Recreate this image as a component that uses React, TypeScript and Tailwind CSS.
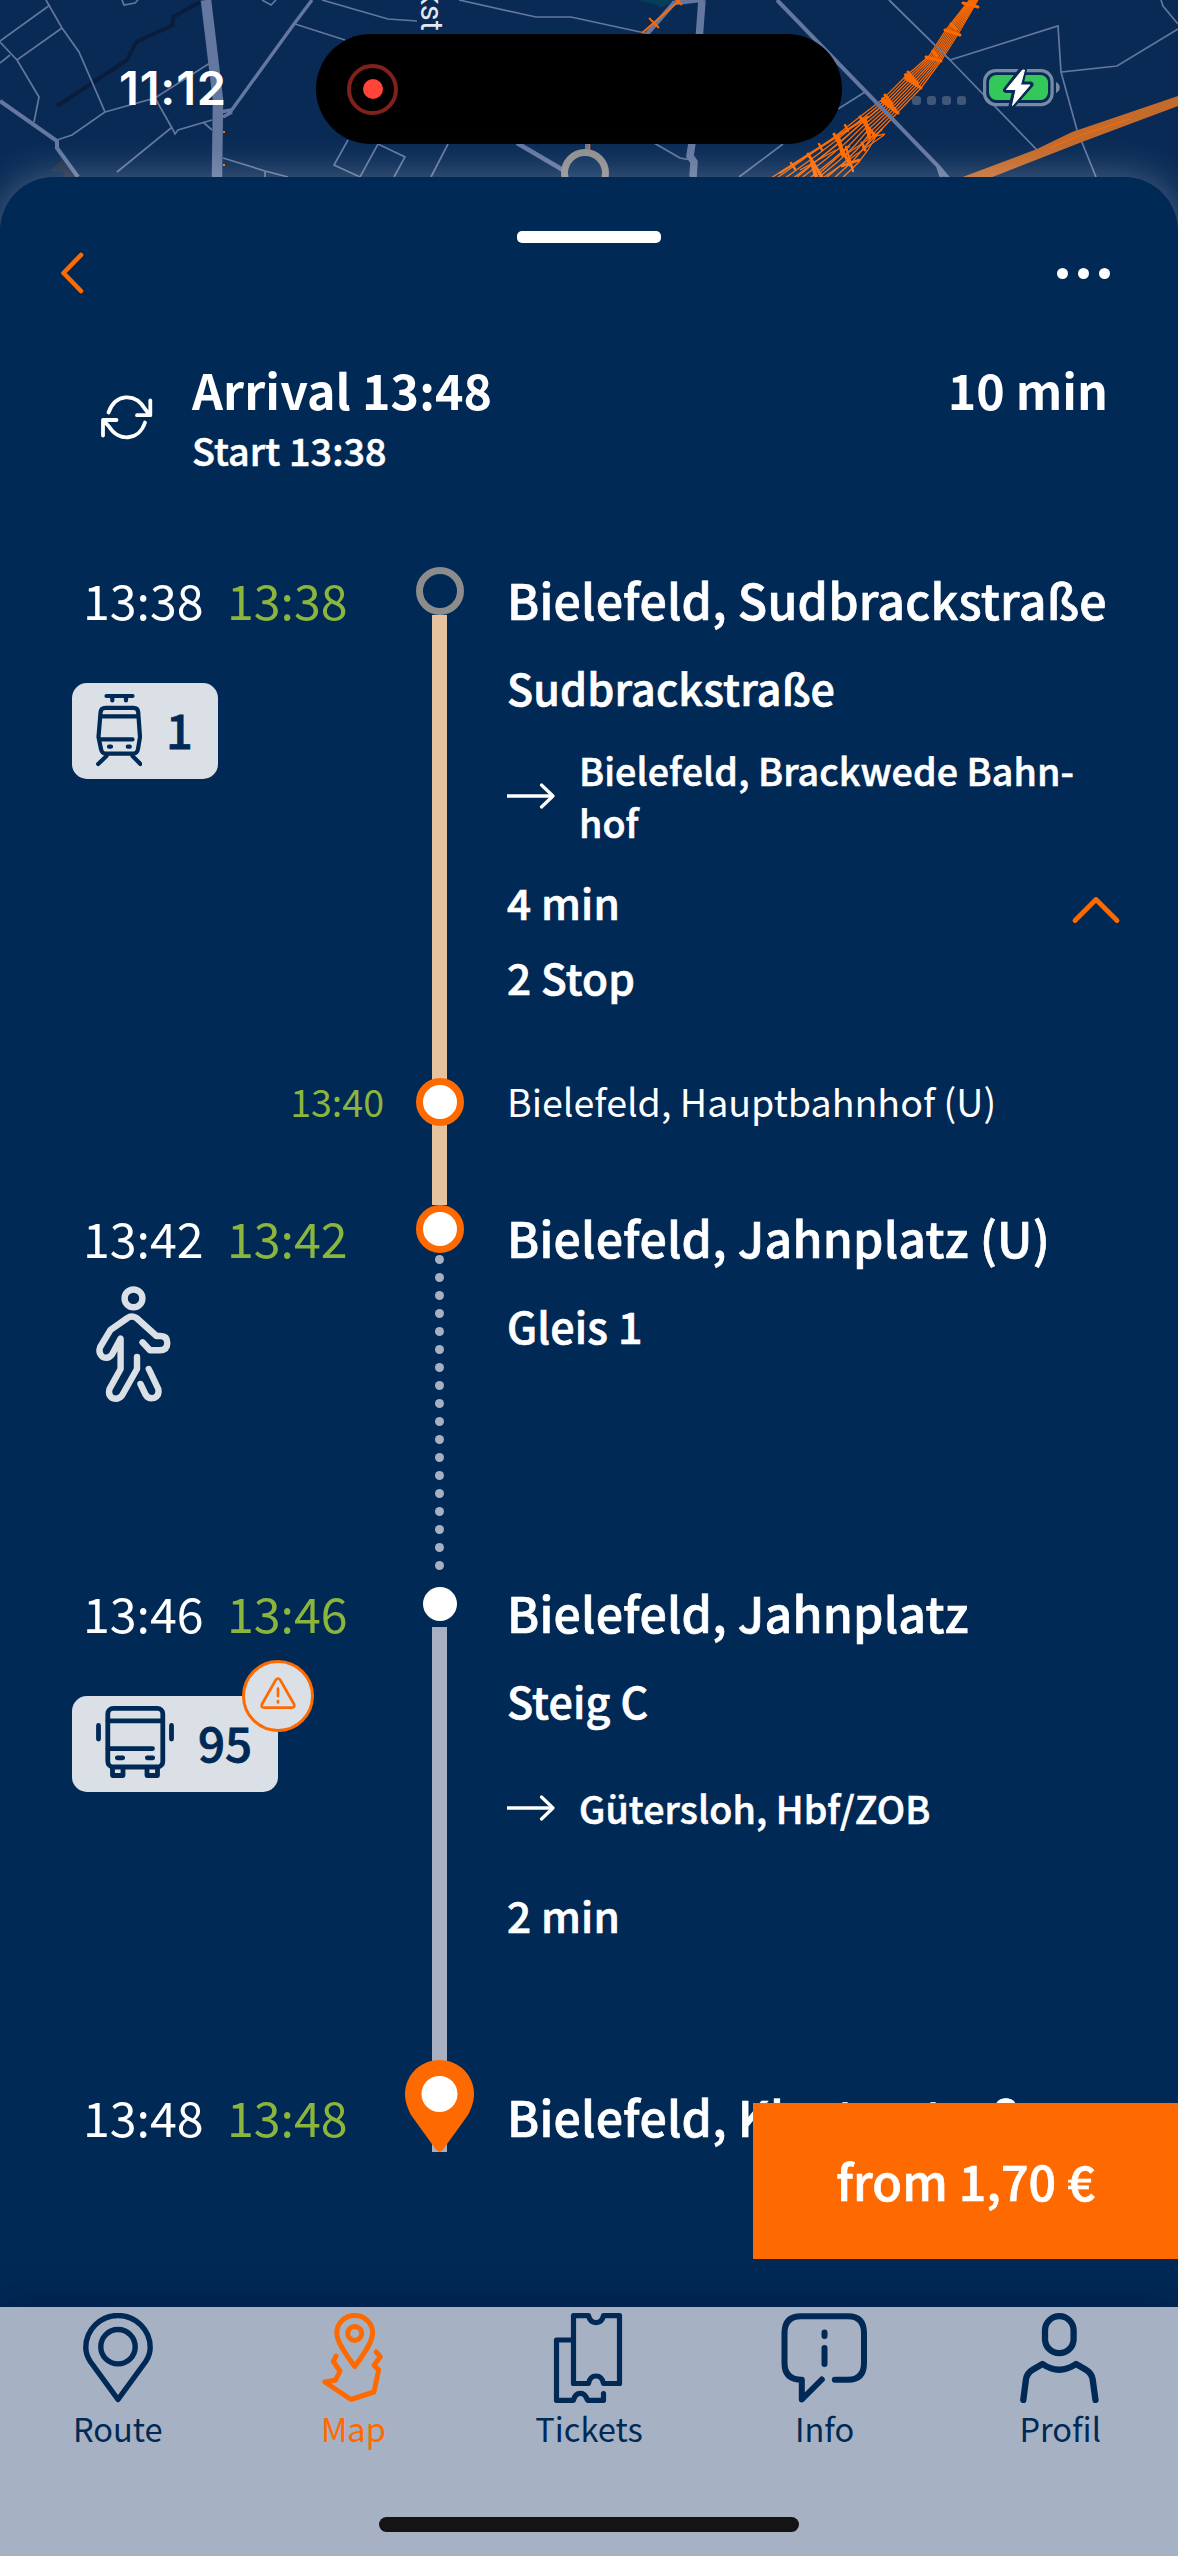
import React from "react";

const ORANGE = "#ff6a00";
const NAVY = "#002955";

/* ---------- Map behind the sheet ---------- */

const railLeft: [number, number][] = [
  [971, -2], [946, 30], [929, 56], [905, 77], [883, 99], [857, 119], [833, 138], [808, 156], [774, 180],
];
const railRight: [number, number][] = [
  [979, -2], [958, 34], [941, 61], [921, 88], [898, 112], [878, 133], [868, 150], [858, 163], [838, 182],
];
const strandCount = 9;

function strand(i: number) {
  const t = i / (strandCount - 1);
  return railLeft
    .map(([x, y], k) => {
      const [rx, ry] = railRight[k];
      return `${(x + (rx - x) * t).toFixed(1)},${(y + (ry - y) * t).toFixed(1)}`;
    })
    .join(" ");
}

function MapBackdrop() {
  return (
    <svg className="absolute inset-0" width="1178" height="260" viewBox="0 0 1178 260" fill="none">
      <rect width="1178" height="260" fill="#082a55" />
      <path d="M638 0 L664 7 L674 0Z" fill="#063d58" />
      <path d="M50 171 L62 159 L76 177 H64 L63 172Z" fill="#1c2f4a" />
      <path d="M200 2 L173 17 V25 L136 42 L127 60 L57 106" stroke="#0a1d3d" strokeWidth="4" />
      <g stroke="#63779f" strokeWidth="1.7">
        <path d="M46 0 L62 28 L79 52 L105 112 L72 135 L57 140" />
        <path d="M50 5 L0 41 M62 28 L17 60 L0 42 M10 55 L0 63 M17 60 L39 97 L34 122" />
        <path d="M122 0 L124 5 L135 3 L138 0 M262 0 L271 5 L276 0" />
        <path d="M105 112 L155 98 L210 63 M155 98 L172 128 L175 134 L178 130 L212 120 M171 128 L117 172 M203 122 L212 130" />
        <path d="M223 158 L265 171 L288 177 M265 171 V177" />
        <path d="M322 0 L388 19 L417 21 M295 24 L345 40 M459 0 L536 17 H571 L645 33" />
        <path d="M348 140 L334 165 L360 177 L378 144 L405 157 L394 177 M448 144 L431 177" />
        <path d="M654 143 L680 158 L691 160 M783 144 L739 177 M838 109 L865 92" />
        <path d="M889 0 L950 60 L1037 150 M950 60 L1058 26 L1061 72 L1117 66 L1178 29 M1061 72 L1077 130 L1096 177 M1161 0 L1163 6 L1178 24" />
      </g>
      <path d="M0 101 L57 141 V148 L78 177" stroke="#63779f" strokeWidth="4" />
      <path d="M312 0 L294 24 L231 111 M220 112 L231 110 M223 117 L232 112" stroke="#63779f" strokeWidth="3.4" />
      <path d="M206 0 L218 100 L217 177" stroke="#63779f" strokeWidth="10.5" />
      <path d="M702 0 L699 40 M692 143 L690 156 L694 162 L693 177" stroke="#63779f" strokeWidth="7.5" />
      <path d="M517 143 L563 170" stroke="#63779f" strokeWidth="4.5" />
      <path d="M700 0 L674 3 L646 35" stroke="#63779f" strokeWidth="4.5" />
      <path d="M680 0 L642 33 M649 18 L659 28 M675 -1 L682 5" stroke={ORANGE} strokeWidth="1.8" />
      <path d="M587 144 V150" stroke="#63779f" strokeWidth="4" />
      <path d="M589.5 144 V150" stroke={ORANGE} strokeWidth="1.5" />
      <path d="M223 131 h2 v2 h-2z M223 164 h2 v2 h-2z" fill={ORANGE} />
      <circle cx="585" cy="173" r="20.5" fill="#0c325f" stroke="#8f8f8f" strokeWidth="7" />
      <path d="M960 178 L1037 149 L1072 132 L1178 96 V106 L1082 142 L990 178Z" fill="#c46a2b" />
      <path d="M1050 148 L1081 135 L1130 119" stroke={ORANGE} strokeWidth="1" />
      <g stroke={ORANGE} strokeWidth="1.3">
        {Array.from({ length: strandCount }, (_, i) => (
          <polyline key={i} points={strand(i)} />
        ))}
        <path d="M862 150 L883 128 M866 138 L885 134 M845 155 L882 130 M760 185 L868 116" />
        <path d="M796 178 L842 140 L884 104 M812 180 L850 146 M820 180 L884 135 M800 170 L836 150" />
      </g>
      <g stroke={ORANGE} strokeWidth="3" strokeLinecap="round">
        <path d="M963 3 L978 7 M945 30 L960 35 M926 57 L941 61 M905 78 L921 88 M882 101 L898 113" />
        <path d="M951 24 L956 29 M933 51 L937 56 M908 72 L914 79 M885 95 L892 104 M860 117 L875 136 M834 134 L850 165 M862 143 L865 150 M808 154 L822 177" />
        <path d="M780 173 L868 117" strokeWidth="1.8" />
        <path d="M845 125 L848 131 M819 144 L822 150 M791 163 L795 169 M846 147 L853 171 M842 166 L859 160" strokeWidth="2.4" />
        <path d="M906 75 L917 83 M883 99 L895 110 M865 120 L869 135 M838 137 L843 155 M812 162 L816 177" strokeWidth="4" />
      </g>
      <path d="M777 0 L938 166 L948 178 M938 166 L942 178" stroke="#63779f" strokeWidth="4" />
      <path d="M889 0 L950 60" stroke="#63779f" strokeWidth="1.7" />
    </svg>
  );
}

function StatusBar() {
  return (
    <div className="relative flex h-[177px] items-start">
      <span className="mt-[64px] ml-[119px] w-[197px] font-['Inter'] text-[47px] leading-[48px] font-semibold tracking-[0.8px] text-white">
        11:12
      </span>
      <span className="absolute top-[-11px] left-[415px] font-['Roboto'] text-[31px] leading-[32px] text-[#e3e9ef] [writing-mode:vertical-rl]">
        kst
      </span>
      <div className="mt-[34px] flex h-[110px] w-[526px] items-center rounded-full bg-black pl-[31px]">
        <div className="flex h-[51px] w-[51px] items-center justify-center rounded-full border-[4.5px] border-[#7f211c]">
          <div className="h-[20px] w-[20px] rounded-full bg-[#ff4439]" />
        </div>
      </div>
      <div className="mt-[96px] ml-[70px] flex gap-[6px]">
        {[0, 1, 2, 3].map((i) => (
          <div key={i} className="h-[9px] w-[9px] rounded-[3px] bg-[#405777]" />
        ))}
      </div>
      <svg className="mt-[66px] ml-[17px]" width="82" height="44" viewBox="0 0 82 44" fill="none">
        <rect x="1.6" y="4.6" width="67.5" height="34" rx="11" stroke="#778aa4" strokeWidth="3.2" />
        <path d="M73 16 C78 18 78 25 73 27Z" fill="#778aa4" />
        <rect x="6" y="9" width="59" height="25" rx="7.5" fill="#34c759" />
        <path
          d="M39 3.5 L23 24 H32.5 L28.5 40 L47.5 18.5 H37.5 L41 3.5Z"
          fill="#fff"
          stroke="#082a55"
          strokeWidth="6"
          strokeLinejoin="round"
        />
        <path d="M39.5 4 L23.5 23.5 H33 L29.5 39.5 L47 19 H37.5 L41.5 4Z" fill="#fff" stroke="#fff" strokeWidth="1" strokeLinejoin="round" />
      </svg>
    </div>
  );
}

/* ---------- Itinerary pieces ---------- */

function Times({ planned, actual }: { planned: string; actual: string }) {
  return (
    <div className="flex gap-[24px] pl-[83px] text-[48.3px] leading-[64px]">
      <span className="w-[120px] text-white">{planned}</span>
      <span className="text-[#8bb53c]">{actual}</span>
    </div>
  );
}

function StopTitle({ children }: { children: React.ReactNode }) {
  return (
    <div className="text-[48.3px] leading-[64px] font-medium tracking-[0.2px] whitespace-nowrap [-webkit-text-stroke:0.7px]">
      {children}
    </div>
  );
}

function Platform({ children }: { children: React.ReactNode }) {
  return (
    <div className="mt-[26px] text-[43px] leading-[60px] font-medium tracking-[0.15px] [-webkit-text-stroke:0.7px]">
      {children}
    </div>
  );
}

function Direction({ children }: { children: React.ReactNode }) {
  return (
    <div className="flex items-center text-[37.6px] leading-[52px] font-medium tracking-[0.1px] [-webkit-text-stroke:0.6px]">
      <svg className="mr-[24px]" width="48" height="30" viewBox="0 0 48 30" fill="none">
        <path d="M0 15 H46" stroke="#fff" strokeWidth="3.6" />
        <path d="M34.5 4 L46 15 L34.5 26" stroke="#fff" strokeWidth="3.2" strokeLinecap="round" strokeLinejoin="round" />
      </svg>
      <div>{children}</div>
    </div>
  );
}

function Leg({
  className,
  left,
  rail,
  children,
}: {
  className: string;
  left: React.ReactNode;
  rail: React.ReactNode;
  children: React.ReactNode;
}) {
  return (
    <div className={`flex ${className}`}>
      <div className="w-[405px] shrink-0">{left}</div>
      <div className="flex w-[69px] shrink-0 flex-col items-center">{rail}</div>
      <div className="ml-[33px] min-w-0 flex-1">{children}</div>
    </div>
  );
}

function StopDot() {
  return (
    <div className="h-[48px] w-[48px] shrink-0 rounded-full border-[7px] border-[#ff6a00] bg-white" />
  );
}

function TramIcon() {
  return (
    <svg width="46" height="76" viewBox="24 11 46 76" fill="none" stroke={NAVY} strokeWidth="4.2" strokeLinecap="round" strokeLinejoin="round">
      <path d="M34.5 14 H60.5 M40.3 14 V18.5 M54 14 V18.5" />
      <path d="M33.5 25.8 H61.5 Q65.8 25.8 66.2 30 L68 55 L66 67 Q65.2 71.6 61 71.6 H34 Q29.8 71.6 29 67 L26.5 55 L28.6 30 Q29 25.8 33.5 25.8Z" />
      <path d="M28.5 34.3 H66 M27 57.4 H60.5 M37 64.7 H39 M55.8 64.7 H57.8 M34.5 74 L26.2 82 M60.5 74 L68.4 82" />
    </svg>
  );
}

function BusIcon() {
  return (
    <svg width="80" height="76" viewBox="24 12 80 76" fill="none" stroke={NAVY} strokeWidth="4.8" strokeLinecap="round" strokeLinejoin="round">
      <rect x="35.8" y="14.4" width="55" height="58.6" rx="5.5" />
      <path d="M36 26.8 H90.5 M36 54.6 H80.5 M45.3 63.8 H50.7 M75.3 63.8 H80.7" />
      <path d="M26.5 31.5 V45 M99.5 31.5 V45" />
      <path d="M40.5 74 V81.5 H51 V74 M75 74 V81.5 H85.5 V74" />
    </svg>
  );
}

function WalkIcon() {
  return (
    <svg className="mt-[17px] ml-[96px]" width="76" height="118" viewBox="0 0 76 118" fill="none" stroke="#dae0e6" strokeWidth="6.4" strokeLinecap="round" strokeLinejoin="round">
      <circle cx="37.5" cy="12.4" r="8.9" />
      <path d="M46.5 56.3 L54 64.3 H64 Q71.3 64 71.3 57 Q71.3 50 64.5 50 H60.5 L40.5 32 Q35.5 29 31.5 32 L14.5 43.8 L4.2 61 Q2 67 6.5 70.8 Q12.5 73.5 16 68.5 L24.6 52.5 V83 L13.5 103 Q11.8 109 16.3 112 Q22 114.3 26 109.5 L41 83 V71" />
      <path d="M52.8 83 L62.3 103 Q63.8 109.5 58 112 Q52.5 113.5 49.5 108.5 L44.5 98" />
    </svg>
  );
}

/* ---------- Bottom navigation ---------- */

const navItems: { label: string; active?: boolean; icon: React.ReactNode }[] = [
  {
    label: "Route",
    icon: (
      <g strokeWidth="5.4">
        <path d="M45 86.5 L17.3 48.5 C14 43.5 12.8 39 12.8 34.5 A32.2 32 0 0 1 77.2 34.5 C77.2 39 76 43.5 72.7 48.5Z" />
        <circle cx="45" cy="33.7" r="17.2" />
      </g>
    ),
  },
  {
    label: "Map",
    active: true,
    icon: (
      <g strokeWidth="5">
        <path d="M46.7 53.5 C40 44 28.8 30 28.8 20 A17.9 17.6 0 0 1 64.6 20 C64.6 30 53.5 44 46.7 53.5Z" />
        <circle cx="46.7" cy="20.4" r="7" />
        <path d="M28 43 L25.3 48.5 L32 58 L27.6 67 L16.8 69 L43 86.5 L65.9 79 L70.7 57 L66 52.3 L72.3 43.7 L68.2 39" />
      </g>
    ),
  },
  {
    label: "Tickets",
    icon: (
      <g strokeWidth="5.2">
        <path d="M29.5 2.6 H44.5 C45.5 7.5 48 9.7 52 9.7 S58.5 7.5 59.5 2.6 H75.5 V70.5 H59.5 C58.5 65.5 56 63 52 63 S45.5 65.5 44.5 70.5 H29.5Z" />
        <path d="M29.5 27 H12.5 V87.3 H29.5 C30.5 82.5 33 80.3 36.5 80.3 S42 82.5 43.5 87.3 H59.5 V80.5" />
      </g>
    ),
  },
  {
    label: "Info",
    icon: (
      <g strokeWidth="6">
        <path d="M54.8 66.8 H68 Q84 66.8 84 50 V20 Q84 3.2 68 3.2 H21 Q4.5 3.2 4.5 20 V50 Q4.5 66.8 21.8 66.8 V86.5 L41.8 66.5" />
        <path d="M44.5 19.5 V23 M44.5 35 V51" />
      </g>
    ),
  },
  {
    label: "Profil",
    icon: (
      <g strokeWidth="6.3">
        <rect x="30" y="3.2" width="28.6" height="37" rx="14.3" />
        <path d="M8.3 87 L11 66 Q12 60 18 56.5 L27.5 51 Q44.2 62.5 61 51 L70.5 56.5 Q76.5 60 77.6 66 L80.5 87" />
      </g>
    ),
  },
];

function BottomNav() {
  return (
    <nav className="relative flex h-[249px] flex-col bg-[#a7b1c4] shadow-[0_0_36px_rgba(0,5,45,0.35)]">
      <div className="flex pt-[6px]">
        {navItems.map((item) => (
          <div
            key={item.label}
            className={`flex flex-1 flex-col items-center ${item.active ? "text-[#ff6a00]" : "text-[#002955]"}`}
          >
            <svg width="90" height="90" viewBox="0 0 90 90" fill="none" stroke="currentColor" strokeLinecap="round" strokeLinejoin="round">
              {item.icon}
            </svg>
            <span className="mt-[5px] text-[32.6px] leading-[40px]">{item.label}</span>
          </div>
        ))}
      </div>
      <div className="mx-auto mt-auto mb-[24px] h-[15px] w-[420px] rounded-full bg-[#141414]" />
    </nav>
  );
}

export default function App() {
  return (
    <div className="relative flex h-[2556px] w-[1178px] flex-col overflow-hidden bg-[#082a55] font-['Noto_Sans_CJK_SC','Noto_Sans',sans-serif] text-white">
      <MapBackdrop />
      <StatusBar />

      <main className="relative flex h-[2130px] flex-col rounded-t-[54px] bg-[#002955] shadow-[0_0_40px_rgba(255,255,255,0.3)]">
        <div className="mx-auto mt-[54px] h-[12px] w-[144px] rounded-[5px] bg-white" />
        <div className="mt-[7px] flex h-[46px] items-center justify-between pr-[68px] pl-[59px]">
          <svg width="26" height="46" viewBox="0 0 26 46" fill="none">
            <path d="M22 5 L4.5 23 L22 41" stroke={ORANGE} strokeWidth="4.6" strokeLinecap="round" strokeLinejoin="round" />
          </svg>
          <div className="flex gap-[10px]">
            <div className="h-[11px] w-[11px] rounded-full bg-white" />
            <div className="h-[11px] w-[11px] rounded-full bg-white" />
            <div className="h-[11px] w-[11px] rounded-full bg-white" />
          </div>
        </div>

        <header className="flex h-[271px] items-start pt-[61px] pr-[70px] pl-[99px]">
          <svg className="mt-[37px] mr-[37px]" width="56" height="48" viewBox="0 0 56 48" fill="none" stroke="#fff" strokeWidth="3.8" strokeLinecap="round" strokeLinejoin="round">
            <path d="M9.5 18.5 C16 0 36 -2 46 15 L50.5 20.5 M51.3 6.5 V21.2 H38" />
            <path d="M46 28.5 C40 47 19.5 48 10 32.5 L4.5 26.5 M17.5 26 H4 V41.5" />
          </svg>
          <div className="flex-1">
            <div className="text-[48.3px] leading-[64px] font-bold tracking-[0.1px]">Arrival 13:48</div>
            <div className="mt-[3px] text-[37.7px] leading-[52px] font-medium tracking-[0.1px] [-webkit-text-stroke:0.6px]">
              Start 13:38
            </div>
          </div>
          <div className="text-[48.3px] leading-[64px] font-bold">10 min</div>
        </header>

        <Leg
          className="h-[511px]"
          left={
            <>
              <Times planned="13:38" actual="13:38" />
              <div className="mt-[52px] ml-[72px] flex h-[96px] w-[146px] items-center rounded-[15px] bg-[#dae0e6] pl-[24px]">
                <TramIcon />
                <span className="mb-[5px] ml-[24px] text-[47px] leading-[64px] font-medium text-[#002955] [-webkit-text-stroke:0.8px]">
                  1
                </span>
              </div>
            </>
          }
          rail={
            <>
              <div className="h-[48px] w-[48px] shrink-0 rounded-full border-[7px] border-[#8c8c8c]" />
              <div className="w-[15px] flex-1 bg-[#e5c39e]" />
            </>
          }
        >
          <StopTitle>Bielefeld, Sudbrackstraße</StopTitle>
          <Platform>Sudbrackstraße</Platform>
          <div className="mt-[27px]">
            <Direction>
              Bielefeld, Brackwede Bahn-
              <br />
              hof
            </Direction>
          </div>
          <div className="mt-[24px] flex items-start justify-between pr-[57px]">
            <div className="text-[42.3px] leading-[60px] font-medium tracking-[0.2px] [-webkit-text-stroke:0.7px]">
              4 min
              <div className="mt-[15px]">2 Stop</div>
            </div>
            <svg className="mt-[23px]" width="50" height="30" viewBox="0 0 50 30" fill="none">
              <path d="M4 25.5 L25 4.5 L46 25.5" stroke={ORANGE} strokeWidth="4.8" strokeLinecap="round" strokeLinejoin="round" />
            </svg>
          </div>
        </Leg>

        <Leg
          className="h-[127px]"
          left={<div className="pr-[21px] text-right text-[37.6px] leading-[46px] text-[#8bb53c]">13:40</div>}
          rail={
            <>
              <div className="flex h-[48px] w-full justify-center bg-[linear-gradient(#e5c39e,#e5c39e)] bg-[length:15px_100%] bg-center bg-no-repeat">
                <StopDot />
              </div>
              <div className="w-[15px] flex-1 bg-[#e5c39e]" />
            </>
          }
        >
          <div className="text-[37.6px] leading-[46px]">Bielefeld, Hauptbahnhof (U)</div>
        </Leg>

        <Leg
          className="h-[375px]"
          left={
            <>
              <Times planned="13:42" actual="13:42" />
              <WalkIcon />
            </>
          }
          rail={
            <>
              <StopDot />
              <div className="mt-[2px] flex flex-col gap-[9px]">
                {Array.from({ length: 18 }, (_, i) => (
                  <div key={i} className="h-[9px] w-[9px] rounded-full bg-[#a7b1c4]" />
                ))}
              </div>
            </>
          }
        >
          <StopTitle>Bielefeld, Jahnplatz (U)</StopTitle>
          <Platform>Gleis 1</Platform>
        </Leg>

        <Leg
          className="h-[480px]"
          left={
            <>
              <Times planned="13:46" actual="13:46" />
              <div className="relative mt-[52px] ml-[72px] flex h-[96px] w-[206px] items-center rounded-[15px] bg-[#dae0e6] pl-[24px]">
                <BusIcon />
                <span className="mb-[4px] ml-[22px] text-[47.5px] leading-[64px] font-medium text-[#002955] [-webkit-text-stroke:0.8px]">
                  95
                </span>
                <div className="absolute top-[-36px] right-[-36px] h-[72px] w-[72px] rounded-full border-[3px] border-[#ff6a00] bg-[#dae0e6]">
                  <svg width="66" height="66" viewBox="3 3 66 66" fill="none" stroke={ORANGE} strokeWidth="2.7" strokeLinecap="round" strokeLinejoin="round">
                    <path d="M33.8 19.8 Q36 17.2 38.2 19.8 L52.2 44.5 Q53 47.6 50 47.6 H22 Q19 47.6 19.8 44.5Z" />
                    <path d="M36 28.5 V36 M36 41 V42.5" />
                  </svg>
                </div>
              </div>
            </>
          }
          rail={
            <>
              <div className="mt-[7px] h-[34px] w-[34px] rounded-full bg-white" />
              <div className="mt-[6px] w-[15px] flex-1 bg-[#a7afc3]" />
            </>
          }
        >
          <StopTitle>Bielefeld, Jahnplatz</StopTitle>
          <Platform>Steig C</Platform>
          <div className="mt-[52px]">
            <Direction>Gütersloh, Hbf/ZOB</Direction>
          </div>
          <div className="mt-[51px] text-[42.3px] leading-[60px] font-medium tracking-[0.2px] [-webkit-text-stroke:0.7px]">
            2 min
          </div>
        </Leg>

        <Leg
          className="h-[92px]"
          left={
            <div className="pt-[24px]">
              <Times planned="13:48" actual="13:48" />
            </div>
          }
          rail={
            <svg width="69" height="92" viewBox="0 0 69 92">
              <path d="M27 0 H42 V92 H27Z" fill="#a7afc3" />
              <path d="M34.5 0 C15 0 0 15.5 0 34 C0 42 3 49 6 55 L30.5 89 Q34.5 94.5 38.5 89 L63 55 C66 49 69 42 69 34 C69 15.5 54 0 34.5 0Z" fill={ORANGE} />
              <circle cx="34.5" cy="34" r="18" fill="#fff" />
            </svg>
          }
        >
          <div className="pt-[24px]">
            <StopTitle>Bielefeld, Klosterstraße</StopTitle>
          </div>
        </Leg>

        <button className="absolute right-0 bottom-[48px] flex h-[156px] w-[425px] items-center justify-center bg-[#ff6a00] pb-[2px] text-[48.3px] leading-[64px] font-medium tracking-[0.1px] [-webkit-text-stroke:0.7px]">
          from 1,70 €
        </button>
      </main>

      <BottomNav />
    </div>
  );
}
